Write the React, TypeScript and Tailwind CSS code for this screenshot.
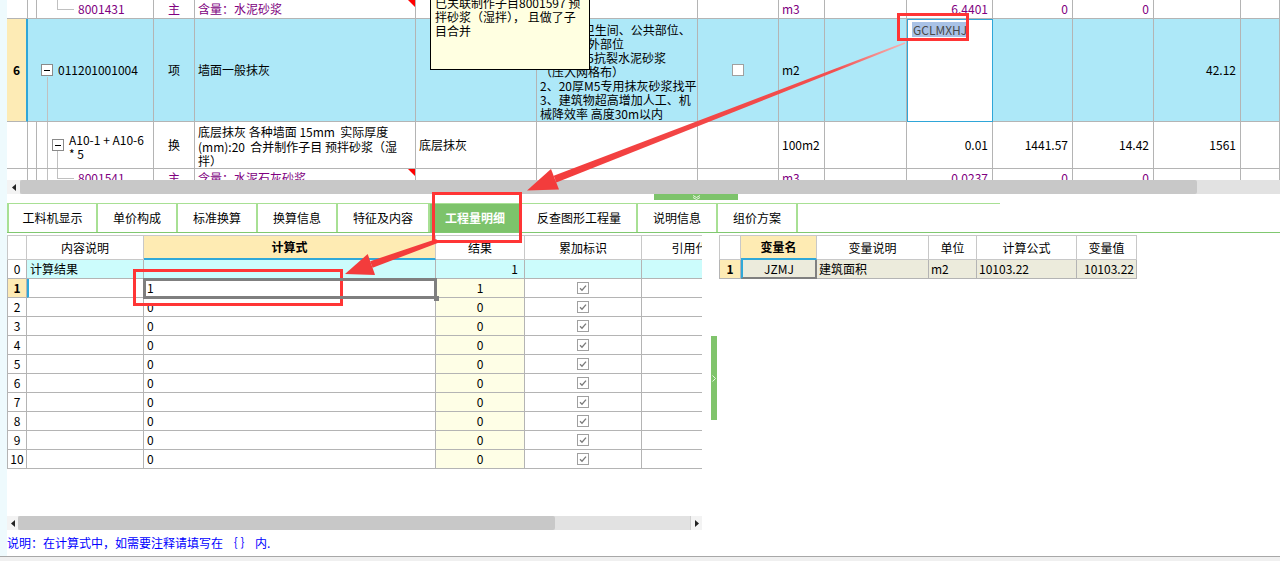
import React from "react";
import { twMerge } from "tailwind-merge";

const FONT = "font-['Noto_Sans_CJK_SC','Liberation_Sans',sans-serif]";
const BL = "bg-[#ade8f8]";
const PU = "text-[#800080]";

function Cell({ c, children }: { c?: string; children?: React.ReactNode }) {
  return (
    <div
      className={twMerge(
        "relative flex items-center overflow-hidden whitespace-nowrap border-r border-b border-[#b4b4b4]",
        c
      )}
    >
      {children}
    </div>
  );
}

function RedTri() {
  return (
    <span className="absolute right-0 top-0 w-0 h-0 border-t-[7px] border-t-[#ff0000] border-l-[7px] border-l-transparent" />
  );
}

function MinusBox() {
  return (
    <span className="w-[12px] h-[12px] border border-[#8a8a8a] bg-white flex items-center justify-center shrink-0">
      <span className="w-[6px] h-px bg-black" />
    </span>
  );
}

function VLine({ c }: { c: string }) {
  return <span className={twMerge("absolute w-px bg-[#c0c0c0]", c)} />;
}

function Check() {
  return (
    <svg width="12" height="12" viewBox="0 0 12 12">
      <rect x="0.5" y="0.5" width="11" height="11" fill="white" stroke="#a0a0a0" />
      <path d="M3 6.2l2 2 4-4.6" stroke="#7a7a7a" strokeWidth="1.3" fill="none" />
    </svg>
  );
}

function ArrowL() {
  return (
    <svg width="4" height="7" viewBox="0 0 4 7">
      <path d="M4 0L0 3.5L4 7Z" fill="#222" />
    </svg>
  );
}
function ArrowR() {
  return (
    <svg width="4" height="7" viewBox="0 0 4 7">
      <path d="M0 0L4 3.5L0 7Z" fill="#222" />
    </svg>
  );
}

function TopTable() {
  return (
    <div className="relative h-[180px] overflow-hidden">
      <div className="grid grid-cols-[21px_9px_117px_41px_221px_121px_161px_81px_46px_82px_86px_80px_81px_87px_39px] grid-rows-[19px_103px_47px_19px] text-[12px] leading-[14px] text-black">
        {/* row 0 */}
        <Cell />
        <Cell />
        <Cell c={`pl-[41px] ${PU}`}>
          <VLine c="left-[20px] top-0 h-[9px]" />
          <span className="absolute left-[20px] top-[9px] w-[17px] h-px bg-[#c0c0c0]" />
          8001431
        </Cell>
        <Cell c={`justify-center ${PU}`}>主</Cell>
        <Cell c={`pl-[3px] ${PU}`}>
          含量：水泥砂浆
          <RedTri />
        </Cell>
        <Cell />
        <Cell />
        <Cell />
        <Cell c={`pl-[3px] ${PU}`}>m3</Cell>
        <Cell />
        <Cell c={`justify-end pr-[4px] ${PU}`}>6.4401</Cell>
        <Cell c={`justify-end pr-[4px] ${PU}`}>0</Cell>
        <Cell c={`justify-end pr-[4px] ${PU}`}>0</Cell>
        <Cell />
        <Cell />

        {/* row 6 */}
        <Cell c="justify-center bg-[#fdebb5] font-bold border-r-2 border-r-[#2fa6d8]">6</Cell>
        <Cell c={`${BL} border-r-0`} />
        <Cell c={`${BL} pl-[4px]`}>
          <MinusBox />
          <span className="ml-[5px]">011201001004</span>
          <VLine c="left-[10px] top-[58px] bottom-0" />
        </Cell>
        <Cell c={`${BL} justify-center`}>项</Cell>
        <Cell c={`${BL} pl-[3px]`}>墙面一般抹灰</Cell>
        <Cell c={BL} />
        <Cell c={`${BL} flex-col items-start justify-start pl-[3px] pt-[4px]`}>
          <div>1、室内卫生间、公共部位、</div>
          <div>走道及室外部位</div>
          <div>5厚1：2.5抗裂水泥砂浆</div>
          <div>（压入网格布）</div>
          <div>2、20厚M5专用抹灰砂浆找平</div>
          <div>3、建筑物超高增加人工、机</div>
          <div>械降效率 高度30m以内</div>
        </Cell>
        <Cell c={`${BL} justify-center`}>
          <span className="w-[12px] h-[12px] bg-white border border-[#a0a0a0]" />
        </Cell>
        <Cell c={`${BL} pl-[3px]`}>m2</Cell>
        <Cell c={BL} />
        <Cell c="bg-white border border-[#2fa6d8] items-start pl-[4px] pt-[2px]">
          <span className="bg-[#a9c2e6] text-[#4a4a4a] leading-[15px] px-px">GCLMXHJ</span>
          <span className="w-px h-[15px] bg-black" />
        </Cell>
        <Cell c={BL} />
        <Cell c={BL} />
        <Cell c={`${BL} justify-end pr-[4px]`}>42.12</Cell>
        <Cell c={BL} />

        {/* row 7 */}
        <Cell />
        <Cell />
        <Cell c="items-start pl-[15px] pt-[11px]">
          <VLine c="left-[10px] top-0 bottom-0" />
          <VLine c="left-[20px] top-[29px] bottom-0" />
          <span className="mt-[6px]">
            <MinusBox />
          </span>
          <div className="ml-[5px]">
            <div>A10-1 + A10-6</div>
            <div>* 5</div>
          </div>
        </Cell>
        <Cell c="justify-center">换</Cell>
        <Cell c="flex-col items-start justify-start pl-[3px] pt-[3px] leading-[14.5px]">
          <div>底层抹灰 各种墙面 15mm&nbsp;&nbsp;实际厚度</div>
          <div>(mm):20&nbsp;&nbsp;合并制作子目 预拌砂浆（湿</div>
          <div>拌）</div>
        </Cell>
        <Cell c="pl-[3px]">底层抹灰</Cell>
        <Cell />
        <Cell />
        <Cell c="pl-[3px]">100m2</Cell>
        <Cell />
        <Cell c="justify-end pr-[4px]">0.01</Cell>
        <Cell c="justify-end pr-[4px]">1441.57</Cell>
        <Cell c="justify-end pr-[4px]">14.42</Cell>
        <Cell c="justify-end pr-[4px]">1561</Cell>
        <Cell />

        {/* row 8 */}
        <Cell />
        <Cell />
        <Cell c={`pl-[41px] ${PU}`}>
          <VLine c="left-[10px] top-0 bottom-0" />
          <VLine c="left-[20px] top-0 h-[9px]" />
          <span className="absolute left-[20px] top-[9px] w-[17px] h-px bg-[#c0c0c0]" />
          8001541
        </Cell>
        <Cell c={`justify-center ${PU}`}>主</Cell>
        <Cell c={`pl-[3px] ${PU}`}>
          含量：水泥石灰砂浆
          <RedTri />
        </Cell>
        <Cell />
        <Cell />
        <Cell />
        <Cell c={`pl-[3px] ${PU}`}>m3</Cell>
        <Cell />
        <Cell c={`justify-end pr-[4px] ${PU}`}>0.0237</Cell>
        <Cell c={`justify-end pr-[4px] ${PU}`}>0</Cell>
        <Cell c={`justify-end pr-[4px] ${PU}`}>0</Cell>
        <Cell />
        <Cell />
      </div>

      {/* tooltip */}
      <div className="absolute left-[423px] top-[-11px] w-[160px] h-[81px] bg-[#ffffe1] border border-black pl-[4px] pt-[6px] text-[12px] leading-[14px] text-black">
        <div>已关联制作子目8001597 预</div>
        <div>拌砂浆（湿拌）， 且做了子</div>
        <div>目合并</div>
      </div>
    </div>
  );
}

const TABS: [string, string][] = [
  ["工料机显示", "w-[91px] border-l-2"],
  ["单价构成", "w-[80px]"],
  ["标准换算", "w-[80px]"],
  ["换算信息", "w-[80px]"],
  ["特征及内容", "w-[92px]"],
  ["工程量明细", "w-[92px]"],
  ["反查图形工程量", "w-[116px]"],
  ["说明信息", "w-[80px]"],
  ["组价方案", "w-[80px]"],
];

function TabBar() {
  return (
    <div className="flex h-[30px] border-b border-[#80c870]">
      <div className="flex w-[993px] border-t border-[#a8e094]">
        {TABS.map(([t, w]) =>
          t === "工程量明细" ? (
            <div
              key={t}
              className={`${w} flex items-center justify-center bg-[#7dc36b] text-white font-bold text-[12px] border-r-2 border-[#a8e094]`}
            >
              {t}
            </div>
          ) : (
            <div
              key={t}
              className={`${w} flex items-center justify-center text-[12px] text-black border-r-2 border-[#a8e094]`}
            >
              {t}
            </div>
          )
        )}
      </div>
    </div>
  );
}

function LC({ c, children }: { c?: string; children?: React.ReactNode }) {
  return (
    <div
      className={twMerge(
        "relative flex items-center overflow-hidden whitespace-nowrap border-r border-b border-[#b4b4b4] text-[12px] text-black",
        c
      )}
    >
      {children}
    </div>
  );
}

function LowerLeft() {
  const rows = Array.from({ length: 9 }, (_, i) => i + 2);
  return (
    <div className="w-[695px] h-[295px] flex flex-col">
      <div className="w-[695px] overflow-hidden">
        <div className="grid grid-cols-[20px_117px_292px_89px_117px_108px] grid-rows-[25px_repeat(11,19px)] w-[743px]">
          {/* header */}
          <LC c="border-t border-l border-[#c8c8c8] bg-white" />
          <LC c="border-t border-[#c8c8c8] justify-center">内容说明</LC>
          <LC c="border-t border-[#c8c8c8] justify-center bg-[#feebb3] font-bold border-b-2 border-b-[#30a8d8]">计算式</LC>
          <LC c="border-t border-[#c8c8c8] justify-center">结果</LC>
          <LC c="border-t border-[#c8c8c8] justify-center">累加标识</LC>
          <LC c="border-t border-[#c8c8c8] justify-center">引用代码</LC>

          {/* row 0 */}
          <LC c="border-l justify-center">0</LC>
          <LC c="bg-[#ccfcfc] pl-[3px]">计算结果</LC>
          <LC c="bg-[#ccfcfc]" />
          <LC c="bg-[#ccfcfc] justify-end pr-[6px]">1</LC>
          <LC c="bg-[#ccfcfc]" />
          <LC c="bg-[#ccfcfc]" />

          {/* row 1 */}
          <LC c="border-l justify-center bg-[#fdebb5] font-bold">1</LC>
          <LC c="border-l-2 border-l-[#30a8d8]" />
          <LC c="pl-[3px] overflow-visible z-10">
            1
            <span className="absolute left-[-1px] top-[-1px] right-[-2px] bottom-[-2px] border-[3px] border-[#7f7f7f]" />
            <span className="absolute right-[-4px] bottom-[-4px] w-[5px] h-[5px] bg-[#7f7f7f]" />
          </LC>
          <LC c="bg-[#fefee6] justify-center">1</LC>
          <LC c="justify-center">
            <Check />
          </LC>
          <LC />

          {rows.map((n) => (
            <React.Fragment key={n}>
              <LC c="border-l justify-center">{n}</LC>
              <LC />
              <LC c="pl-[3px]">0</LC>
              <LC c="bg-[#fefee6] justify-center">0</LC>
              <LC c="justify-center">
                <Check />
              </LC>
              <LC />
            </React.Fragment>
          ))}
        </div>
      </div>
      <div className="flex-1" />
      <div className="h-[14px] flex bg-[#e2e2e2]">
        <div className="w-[11px] bg-[#f3f3f3] flex items-center justify-center">
          <ArrowL />
        </div>
        <div className="w-[537px] bg-[#c8c8c8] rounded-[2px]" />
        <div className="flex-1" />
        <div className="w-[12px] bg-[#f3f3f3] border-l border-[#d0d0d0] flex items-center justify-center">
          <ArrowR />
        </div>
      </div>
    </div>
  );
}

function LowerRight() {
  return (
    <div className="grid grid-cols-[22px_76px_112px_48px_100px_60px] grid-rows-[25px_19px] w-[418px] h-fit">
      <LC c="border-t border-l border-[#c8c8c8]" />
      <LC c="border-t border-[#c8c8c8] justify-center bg-[#feebb3] font-bold border-b-2 border-b-[#30a8d8]">变量名</LC>
      <LC c="border-t border-[#c8c8c8] justify-center">变量说明</LC>
      <LC c="border-t border-[#c8c8c8] justify-center">单位</LC>
      <LC c="border-t border-[#c8c8c8] justify-center">计算公式</LC>
      <LC c="border-t border-[#c8c8c8] justify-center">变量值</LC>

      <LC c="border-l justify-center bg-[#fdebb5] font-bold">1</LC>
      <LC c="bg-[#ecebdc] justify-center border-l-2 border-l-[#30a8d8] border-r-2 border-r-[#808080] border-b-2 border-b-[#808080]">JZMJ</LC>
      <LC c="bg-[#ecebdc] pl-[2px]">建筑面积</LC>
      <LC c="bg-[#ecebdc] pl-[2px]">m2</LC>
      <LC c="bg-[#ecebdc] pl-[2px]">10103.22</LC>
      <LC c="bg-[#ecebdc] justify-end pr-[2px]">10103.22</LC>
    </div>
  );
}

function Overlay() {
  return (
    <>
      <svg className="absolute left-0 top-0 pointer-events-none" width="1280" height="561">
        <defs>
          <linearGradient id="g1" gradientUnits="userSpaceOnUse" x1="905" y1="43" x2="555" y2="179">
            <stop offset="0" stopColor="#f6b4b4" />
            <stop offset="0.2" stopColor="#f25050" />
            <stop offset="1" stopColor="#f33c3c" />
          </linearGradient>
        </defs>
        <polygon points="905.3,43.8 904.7,42.3 553.7,175.8 556.3,182.4" fill="url(#g1)" />
        <polygon points="527,190.5 559,189.4 551,168.9" fill="#f33c3c" />
        <polygon points="437.7,242.9 436.3,239.1 370.2,261.2 372.6,267.8" fill="#f33c3c" />
        <polygon points="345,274 375.1,274.9 367.7,254.1" fill="#f33c3c" />
      </svg>
      <div className="absolute left-[897px] top-[13px] w-[72px] h-[28px] border-[3px] border-[#ff3535]" />
      <div className="absolute left-[432px] top-[192px] w-[90px] h-[51px] border-[3px] border-[#ff3535]" />
      <div className="absolute left-[133px] top-[269px] w-[210px] h-[37px] border-[3px] border-[#ff3535]" />
    </>
  );
}

export default function App() {
  return (
    <div className={`relative w-[1280px] h-[561px] overflow-hidden bg-white flex flex-col ${FONT}`}>
      <div className="flex h-[556px]">
        <div className="w-[7px] shrink-0 bg-[#eefafd]" />
        <div className="w-[1273px] flex flex-col">
          <TopTable />
          {/* top horizontal scrollbar */}
          <div className="h-[14px] flex bg-[#e2e2e2]">
            <div className="w-[13px] bg-[#f3f3f3] flex items-center justify-center">
              <ArrowL />
            </div>
            <div className="w-[1177px] bg-[#c8c8c8] rounded-[2px]" />
            <div className="flex-1" />
          </div>
          {/* splitter */}
          <div className="h-[9px] pl-[647px]">
            <div className="w-[84px] h-[6px] bg-[#7dc36b] flex items-center justify-center">
              <svg width="9" height="5" viewBox="0 0 9 5">
                <path d="M1 0.5l3.5 2 3.5-2M1 2.5l3.5 2 3.5-2" stroke="#e8f6e2" strokeWidth="1" fill="none" />
              </svg>
            </div>
          </div>
          <TabBar />
          <div className="h-[2px]" />
          <div className="flex h-[295px]">
            <LowerLeft />
            <div className="w-[17px] pl-[9px] pt-[101px]">
              <div className="w-[6px] h-[84px] bg-[#80c46c] flex items-center justify-center">
                <svg width="4" height="7" viewBox="0 0 4 7">
                  <path d="M0.5 0.5l3 3-3 3" stroke="#e8f6e2" strokeWidth="1" fill="none" />
                </svg>
              </div>
            </div>
            <LowerRight />
          </div>
          <div className="h-[26px] flex items-center text-[12px] text-[#0000ff] whitespace-pre">
            说明：在计算式中，如需要注释请填写在 ｛ ｝ 内.
          </div>
        </div>
      </div>
      <div className="h-[5px] border-t border-[#a8a8a8] bg-[#f0f0f0]" />
      <Overlay />
    </div>
  );
}
